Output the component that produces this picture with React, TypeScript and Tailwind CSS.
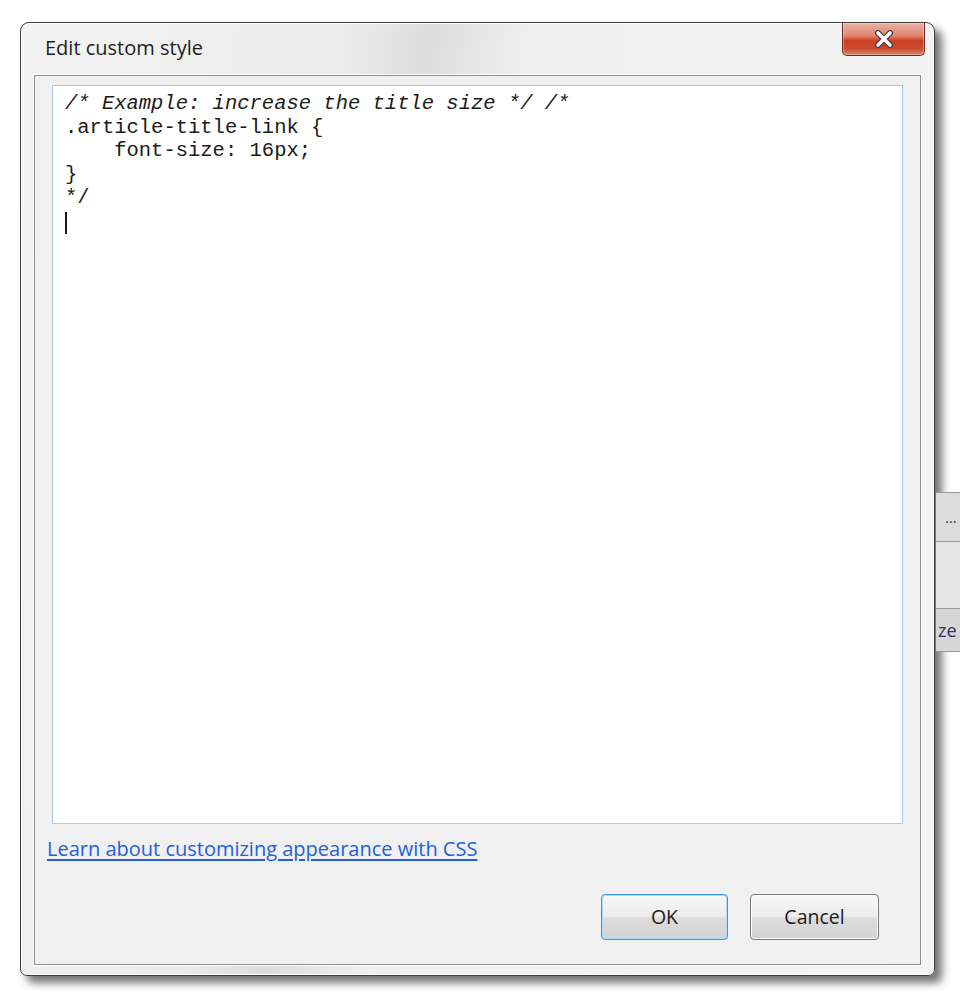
import React from "react";

const ui = { fontFamily: '"Open Sans", "Noto Sans", sans-serif' };
const mono = { fontFamily: '"Liberation Mono", "Courier New", monospace' };

function CloseButton() {
  return (
    <div className="-mr-[4px] flex h-[33px] w-[83px] items-center justify-center rounded-b-[5px] border border-t-0 border-[#6e2a1e] bg-[linear-gradient(to_bottom,#eab1a6_0%,#e0846f_40%,#cf3f24_55%,#c9492f_80%,#dd8470_100%)] shadow-[inset_0_0_0_1px_rgba(255,255,255,0.35)]">
      <svg width="22" height="18" viewBox="0 0 22 18">
        <path d="M5 3 L17 15 M17 3 L5 15" stroke="#3b3b3b" strokeWidth="6" strokeLinecap="round" />
        <path d="M5 3 L17 15 M17 3 L5 15" stroke="#ffffff" strokeWidth="3.6" strokeLinecap="round" />
      </svg>
    </div>
  );
}

function Button({ label, primary, width }: { label: string; primary?: boolean; width: string }) {
  return (
    <button
      className={
        "flex h-[46px] items-center justify-center rounded-[4px] border bg-[linear-gradient(to_bottom,#f7f7f7_0%,#ededed_48%,#dddddd_52%,#d2d2d2_100%)] text-[19.5px] text-[#1b1b1b] " +
        width +
        (primary
          ? " border-[#3a9ad8] shadow-[inset_0_0_0_1px_#a6dcf6]"
          : " border-[#7a7a7a] shadow-[inset_0_0_0_1px_#fbfbfb]")
      }
      style={ui}
    >
      {label}
    </button>
  );
}

export default function App() {
  return (
    <div className="flex h-[1000px] w-[960px] overflow-hidden bg-white" style={ui}>
      <div className="pl-[20px] pt-[22px]">
        {/* window frame */}
        <div className="flex h-[954px] w-[915px] flex-col rounded-t-[9px] rounded-b-[7px] border border-[#3e3e3e] bg-[linear-gradient(100deg,#f3f3f3_0%,#ececec_30%,#dcdcdc_38%,#efefef_47%,#f4f4f4_100%)] px-[13px] pb-[10px] shadow-[7px_7px_9px_rgba(0,0,0,0.55),inset_0_0_0_1px_#ffffff]">
          {/* title bar */}
          <div className="flex h-[52px] items-start justify-between">
            <div className="mt-[10px] pl-[11px] text-[20px] text-[#1e1e1e]">Edit custom style</div>
            <CloseButton />
          </div>

          {/* client area */}
          <div className="flex flex-1 flex-col border border-[#8e8e8e] bg-[#f0f0f0] px-[17px] pt-[9px] shadow-[0_0_0_1px_#ffffff]">
            <div
              className="h-[739px] whitespace-pre border border-[#a9c9e4] bg-white pl-[12px] pt-[6px] text-[20.5px] leading-[23.5px] text-[#1a1a1a]"
              style={mono}
            >
              <div className="italic">/* Example: increase the title size */ /*</div>
              <div>.article-title-link {"{"}</div>
              <div>{"    font-size: 16px;"}</div>
              <div>{"}"}</div>
              <div>*/</div>
              <div className="mt-[2px] h-[22px] w-[2px] bg-[#1a1a1a]" />
            </div>

            <div className="-ml-[5px] mt-[10px]">
              <a className="text-[20px] text-[#2461d8] underline underline-offset-[3px]" href="#">
                Learn about customizing appearance with CSS
              </a>
            </div>

            <div className="mt-[30px] flex justify-end gap-[22px] pr-[24px]">
              <Button label="OK" primary width="w-[127px]" />
              <Button label="Cancel" width="w-[129px]" />
            </div>
          </div>
        </div>
      </div>

      {/* window behind, right edge */}
      <div className="ml-auto flex w-[24px] flex-col">
        <div className="h-[492px]" />
        <div className="flex h-[50px] items-center border-y border-[#9a9a9a] bg-[#dcdcdc] pl-[9px] text-[15px] text-[#303060]">…</div>
        <div className="h-[66px] bg-[#e4e4e4]" />
        <div className="flex h-[44px] items-center border-y border-[#9a9a9a] bg-[#d6d6d6] pl-[2px] text-[18px] leading-none text-[#303060]">
          ze
        </div>
      </div>
    </div>
  );
}
